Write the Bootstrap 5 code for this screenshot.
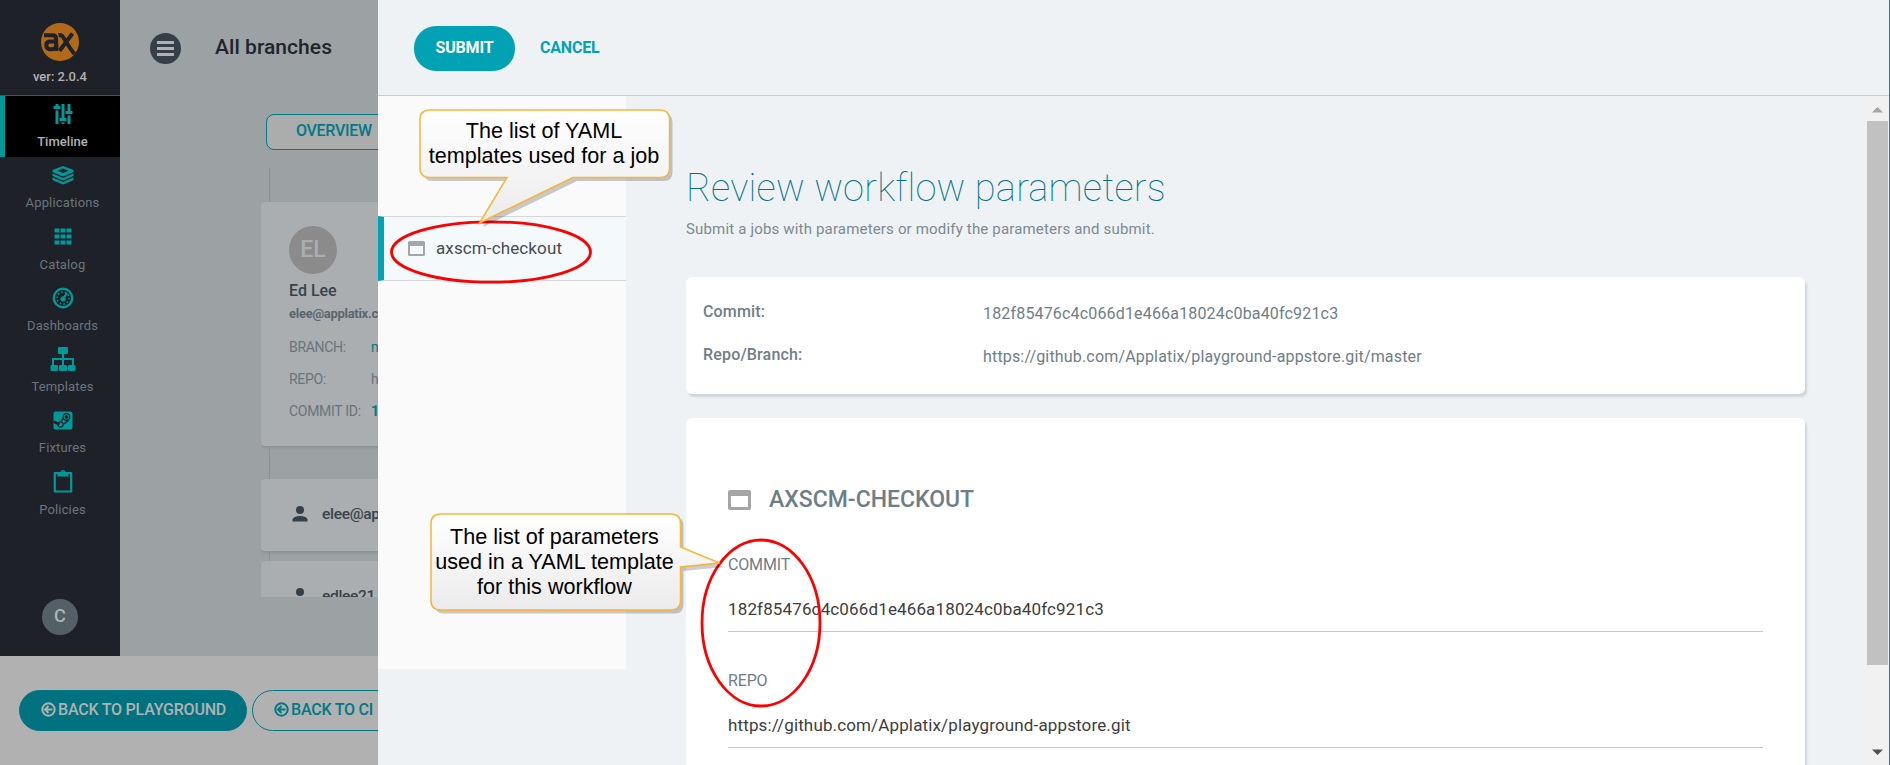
<!DOCTYPE html>
<html lang="en">
<head>
<meta charset="utf-8">
<title>Review workflow parameters</title>
<link href="https://cdn.jsdelivr.net/npm/bootstrap@5.3.0/dist/css/bootstrap.min.css" rel="stylesheet">
<style>
body{font-family:Roboto,"Liberation Sans",sans-serif;font-size:16px;line-height:20px;width:1890px;height:765px;overflow:hidden;background:#eef2f5}
.backdrop-page{width:378px;height:765px;overflow:hidden;background:#b1b1b1}
.app-shell{height:656px}
.side{width:120px;background:#1e2128}
.brand{height:96px;border-bottom:1px solid #515357;padding-top:23px}
.ver{font-size:13px;font-weight:500;line-height:16px;color:#b1b1b1;margin-top:8px}
.side .nav-link{height:61.3px;padding:0;border-left:5px solid transparent;border-radius:0;color:#6a757b;font-size:13px;line-height:16px;letter-spacing:.15px}
.side .nav-link svg{height:36px;width:26px;display:block;color:#009a9a;margin-bottom:2px;flex-shrink:0}
.side .nav-link.active{background:#000;border-color:#009a9a;color:#b1b1b1;font-weight:500;letter-spacing:.05px}
.who{width:36px;height:36px;background:#536166;color:#b1b1b1;font-size:18px;font-weight:500;margin:0 0 21px 42px;padding-bottom:2px}
.work{width:258px;background:#9ca1a4}
.work-head{height:96px;padding:1px 0 0 30px}
.ttl{font-size:21px;font-weight:500;color:#20252d;margin:-3px 0 0 34px;line-height:24px;letter-spacing:.05px}
.tabbtn{width:300px;height:36px;border:1px solid #007985;border-radius:8px;background:#abadad;color:#007985;font-weight:500;margin:18px 0 0 146px;padding:6px 0 0 29px;white-space:nowrap;letter-spacing:-.3px}
.feed{margin:18px 0 0 141px;height:429px;overflow:hidden;padding-top:34px;background:linear-gradient(#8b9093,#8b9093) 8px 0/1px 100% no-repeat}
.bcard{background:#aaaeb1;border-radius:4px;box-shadow:1px 2px 3px #8b9194;width:300px;white-space:nowrap;color:#38434b}
.c1{height:244px;padding:24px 28px 0 28px}
.ava{width:48px;height:48px;background:#8b8b8b;color:#abaeb0;font-size:23px;font-weight:500;padding-bottom:1px}
.who-name{font-weight:500;margin-top:7px}
.who-mail{font-weight:700;font-size:13px;color:#59676d;margin:3px 0 7px;letter-spacing:-.28px}
.meta{font-size:14px;color:#68757c;line-height:32px;letter-spacing:-.3px}
.meta span{display:inline-block;width:82px}
.teal{color:#007985}
.c2{height:72px;padding:0 0 2px 31px}
.c2 + .c2{margin-top:10px}
.c1 + .c2{margin-top:33px}
.c2 span{font-size:15.500px;font-weight:500;margin-left:14px;letter-spacing:-.3px;margin-top:-1px}
.foot{padding:34px 0 0 19px;white-space:nowrap}
.pillb{height:41px;border-radius:21px;border:1px solid #007985;font-weight:500;padding:0 0 2px 21px;width:228px;letter-spacing:-.21px}
.pillb svg{margin-right:2px;flex-shrink:0}
.pill-solid{background:#00727f;color:#b1b1b1}
.pill-line{color:#007985;margin-left:5px}
.drawer{width:1512px;height:765px}
.dhead{height:96px;border-bottom:1px solid #c6ced3;padding:26px 0 0 36px}
.submit,.cancel{height:45px;font-weight:700;padding-bottom:2px;letter-spacing:-.2px}
.submit{width:101px;border-radius:22px;background:#00a2b4;color:#fff}
.cancel{color:#00a2b4;margin-left:25px}
.steps{width:248px;height:573px;background:#fafafa;padding-top:120px}
.step{height:65px;border:solid #d3d8da;border-width:1px 0;background:#f4f9fc;border-left:6px solid #00a2b4;padding-left:24px;color:#454d52;font-size:17px;letter-spacing:.12px}
.step span{margin:-2px 0 0 11px}
.review{width:1240px;height:669px;padding:68px 60px 0 60px;overflow:hidden}
h1{font-size:38px;font-weight:100;line-height:48px;color:#006f8a;margin:0;letter-spacing:.2px}
.subt{font-size:15px;color:#7c8a91;margin-top:7px;line-height:20px;letter-spacing:.17px}
.panelx{background:#fff;border-radius:6px;box-shadow:2px 3px 2px #ccd6dc;width:1119px;color:#6e7e87}
.p1{height:117px;margin-top:38px;padding:25px 17px;letter-spacing:.17px}
.p1 dt{width:280px;font-weight:500;line-height:20px}
.p1 dd{margin:2px 0 21px;line-height:20px}
.p2{height:420px;margin-top:24px;padding:69px 42px}
.p2 h2{font-size:23px;font-weight:500;line-height:26px;margin:0 0 0 17px}
.p2 svg{margin-top:-1px}
.fld label{display:block;line-height:20px;letter-spacing:-.15px}
.fld .val{color:#3d3d3d;border-bottom:1px solid #c4c8ca;height:57px;padding-top:24px;line-height:20px;font-size:17px;letter-spacing:.14px}
.f1{margin-top:42px}
.f2{margin-top:39px}
.sbar{width:24px;background:#f1f1f1;border-right:1px solid #2a80bd;height:669px;padding:10px 1px 9px}
.thumb{width:21px;height:544px;background:#c1c1c1;margin:8px 0 84px}
.edge{right:0;top:0;width:1px;height:96px;background:#2a80bd}
.marks{left:0;top:0}
.note{font:21.600px/25px "Liberation Sans",Arial,sans-serif;color:#000;text-align:center;white-space:nowrap;width:249px}
.n1{left:419.500px;top:118px}
.n2{left:430px;top:524px}
</style>
</head>
<body class="position-relative">
<div class="d-flex">
<div class="backdrop-page">
  <div class="app-shell d-flex">
    <nav class="side d-flex flex-column flex-shrink-0">
      <div class="brand text-center flex-shrink-0">
        <svg width="38" height="38" viewBox="0 0 38 38" class="d-block mx-auto"><circle cx="19" cy="19" r="19" fill="#b06a18"/><g fill="none" stroke="#1e2128" stroke-width="4"><path d="M3 12.200H11.500Q15.200 12.200 15.200 16V28"/><path d="M15.500 18.500H9Q5.300 18.500 5.300 22.300T9 26.200H11Q15.500 26 15.500 22"/><path d="M17.500 12Q20.500 11.500 22 14L29 25Q31 28 33.500 31"/><path d="M31.500 10.500L18.500 27.800"/></g></svg>
        <div class="ver">ver: 2.0.4</div>
      </div>
      <div class="nav flex-column text-center flex-nowrap">
        <a class="nav-link active d-flex flex-column align-items-center"><svg viewBox="-13 -18 26 36" fill="currentColor"><path d="M-7.500-10h3v2h2v3h-7v-3h2zM-7.500-3.500h3V10h-3zM-1.500-10h3V4h2v3h-7V4h2zM-1.500 8.500h3V10h-3zM4.500-10h3v7h2v3h-7v-3h2zM4.500 1.500h3V10h-3z"/></svg><span>Timeline</span></a>
        <a class="nav-link d-flex flex-column align-items-center"><svg viewBox="-13 -18 26 36" fill="currentColor"><path fill-rule="evenodd" d="M0-9l10.500 4v2L0 1.500-10.500-3v-2zM0-6.500L-5.500-4.200 0-2 5.500-4.200z"/><path d="M-10.500-1.500L0 3l10.500-4.500V1L0 5.500-10.500 1zM-10.500 2.500L0 7l10.500-4.500V5L0 9.500-10.500 5z"/></svg><span>Applications</span></a>
        <a class="nav-link d-flex flex-column align-items-center"><svg viewBox="-13 -18 26 36" fill="currentColor"><path d="M-8.500-8.500h5v4h-5zM-2.500-8.500h5v4h-5zM3.500-8.500h5v4h-5zM-8.500-2.500h5v4h-5zM-2.500-2.500h5v4h-5zM3.500-2.500h5v4h-5zM-8.500 3.500h5v4h-5zM-2.500 3.500h5v4h-5zM3.500 3.500h5v4h-5z"/></svg><span>Catalog</span></a>
        <a class="nav-link d-flex flex-column align-items-center"><svg viewBox="-13 -18 26 36" fill="none" stroke="currentColor"><circle r="9.200" stroke-width="2.400"/><circle r="6" stroke-width="1.400" stroke-dasharray="1.200 1.700" pathLength="29"/><circle cy="1" r="2.200" fill="currentColor"/><path d="M0 1L4-5" stroke-width="2.200"/></svg><span>Dashboards</span></a>
        <a class="nav-link d-flex flex-column align-items-center"><svg viewBox="-13 -18 26 36" fill="currentColor"><rect x="-5" y="-12" width="10" height="7" rx="1"/><rect x="-12.500" y="6" width="7.500" height="6" rx="1"/><rect x="-4" y="6" width="8" height="6" rx="1"/><rect x="5" y="6" width="7.500" height="6" rx="1"/><path d="M-1-6h2v5h10v8h-2V1H1v6h-2V1H-9v6h-2v-8h10z"/></svg><span>Templates</span></a>
        <a class="nav-link d-flex flex-column align-items-center"><svg viewBox="-13 -18.500 26 36"><rect x="-9.500" y="-9" width="19" height="18" rx="2" fill="currentColor"/><g fill="none" stroke="#1e2128"><circle cx="3.500" cy="-3.500" r="3.300" stroke-width="1.200"/><circle cx="3.500" cy="-3.500" r="1.400" fill="#1e2128"/><circle cx="-2.500" cy="4" r="2.700" stroke-width="1.200"/><path d="M-9.500 1l6 3" stroke-width="2.600"/><path d="M0-2l-2 3M5.500 0L0 4" stroke-width="1.400"/></g></svg><span>Fixtures</span></a>
        <a class="nav-link d-flex flex-column align-items-center"><svg viewBox="-13 -17.500 26 36"><path d="M-8.200-8.500H8.200V10H-8.200z" fill="none" stroke="currentColor" stroke-width="2.200" stroke-linejoin="round"/><path fill="currentColor" fill-rule="evenodd" d="M-5.500-9.500h3a2.600 2.600 0 0 1 5 0h3v4.500h-11zM-1-9a1 1 0 1 0 2 0 1 1 0 1 0-2 0z"/></svg><span>Policies</span></a>
      </div>
      <div class="who rounded-circle d-flex align-items-center justify-content-center mt-auto">C</div>
    </nav>
    <main class="work">
      <div class="work-head d-flex align-items-center">
        <svg width="31" height="31" viewBox="0 0 31 31"><circle cx="15.500" cy="15.500" r="15.500" fill="#343f47"/><path d="M7 9.500h17M7 15.500h17M7 21.500h17" stroke="#b1b1b1" stroke-width="3"/></svg>
        <div class="ttl">All branches</div>
      </div>
      <div class="tabbtn">OVERVIEW</div>
      <div class="feed">
        <div class="bcard c1">
          <div class="ava rounded-circle d-flex align-items-center justify-content-center">EL</div>
          <div class="who-name">Ed Lee</div>
          <div class="who-mail">elee@applatix.c</div>
          <div class="meta"><span>BRANCH:</span><b class="teal fw-normal">m</b></div>
          <div class="meta"><span>REPO:</span>h</div>
          <div class="meta"><span>COMMIT ID:</span><b class="teal">1</b></div>
        </div>
        <div class="bcard c2 d-flex align-items-center">
          <svg width="16" height="16" viewBox="0 0 16 16" fill="#343f47"><circle cx="8" cy="4" r="4"/><path d="M.5 15.500v-2Q1.500 10 8 10t7.500 3.500v2z"/></svg><span>elee@ap</span>
        </div>
        <div class="bcard c2 d-flex align-items-center">
          <svg width="16" height="16" viewBox="0 0 16 16" fill="#343f47"><circle cx="8" cy="4" r="4"/><path d="M.5 15.500v-2Q1.500 10 8 10t7.500 3.500v2z"/></svg><span>edlee21</span>
        </div>
      </div>
    </main>
  </div>
  <div class="foot d-flex">
    <div class="pillb pill-solid d-flex align-items-center flex-shrink-0"><svg width="15" height="15" viewBox="0 0 15 15" fill="none" stroke="currentColor" stroke-width="2"><circle cx="7.500" cy="7.500" r="6.200"/><path d="M11.500 7.500H4.500M7.500 4L4 7.500 7.500 11"/></svg>BACK TO PLAYGROUND</div>
    <div class="pillb pill-line d-flex align-items-center flex-shrink-0"><svg width="15" height="15" viewBox="0 0 15 15" fill="none" stroke="currentColor" stroke-width="2"><circle cx="7.500" cy="7.500" r="6.200"/><path d="M11.500 7.500H4.500M7.500 4L4 7.500 7.500 11"/></svg>BACK TO CI</div>
  </div>
</div>
<section class="drawer position-relative">
  <div class="dhead d-flex">
    <div class="submit d-flex align-items-center justify-content-center">SUBMIT</div>
    <div class="cancel d-flex align-items-center">CANCEL</div>
    <div class="edge position-absolute"></div>
  </div>
  <div class="d-flex">
    <aside class="steps flex-shrink-0">
      <div class="step d-flex align-items-center"><svg width="17" height="15" viewBox="0 0 17 15"><path fill="#a3a5a6" fill-rule="evenodd" d="M1.500 0h14A1.500 1.500 0 0 1 17 1.500v12a1.500 1.500 0 0 1-1.500 1.500h-14A1.500 1.500 0 0 1 0 13.500v-12A1.500 1.500 0 0 1 1.500 0zM2 5v8h13V5z"/></svg><span>axscm-checkout</span></div>
    </aside>
    <div class="review flex-shrink-0">
      <h1>Review workflow parameters</h1>
      <div class="subt">Submit a jobs with parameters or modify the parameters and submit.</div>
      <div class="panelx p1">
        <dl class="m-0">
          <div class="d-flex"><dt>Commit:</dt><dd>182f85476c4c066d1e466a18024c0ba40fc921c3</dd></div>
          <div class="d-flex"><dt>Repo/Branch:</dt><dd>https://github.com/Applatix/playground-appstore.git/master</dd></div>
        </dl>
      </div>
      <div class="panelx p2">
        <div class="d-flex align-items-center"><svg width="24" height="20" viewBox="0 0 24 20"><path fill="#a3a5a6" fill-rule="evenodd" d="M2 0h19a2 2 0 0 1 2 2v16a2 2 0 0 1-2 2H2a2 2 0 0 1-2-2V2a2 2 0 0 1 2-2zM3 6v11h17V6z"/></svg><h2>AXSCM-CHECKOUT</h2></div>
        <div class="fld f1"><label>COMMIT</label><div class="val">182f85476c4c066d1e466a18024c0ba40fc921c3</div></div>
        <div class="fld f2"><label>REPO</label><div class="val">https://github.com/Applatix/playground-appstore.git</div></div>
      </div>
    </div>
    <div class="sbar"><svg width="21" height="7" viewBox="0 0 21 7" class="d-block"><path d="M5 6.500L10.500 1 16 6.500z" fill="#a3a3a3"/></svg><div class="thumb"></div><svg width="21" height="7" viewBox="0 0 21 7" class="d-block"><path d="M5 .5L10.500 6 16 .5z" fill="#505050"/></svg></div>
  </div>
</section>
</div>
<svg class="marks position-absolute" width="1890" height="765" viewBox="0 0 1890 765">
  <defs><linearGradient id="g" x1="0" y1="0" x2="0" y2="1"><stop offset="0" stop-color="#fff"/><stop offset="1" stop-color="#ebebeb"/></linearGradient></defs>
  <g fill="none" stroke="#f00" stroke-width="2.800"><ellipse cx="491" cy="252" rx="99.500" ry="30.200"/><ellipse cx="761" cy="623" rx="59" ry="83"/></g>
  <path d="M430 113.500H664Q672.500 113.500 672.500 122V172Q672.500 181 664 181H577L483 227 511 181H432Q424 181 424 172V122z" fill="#000" fill-opacity=".2"/>
  <path d="M430 110H660Q669.500 110 669.500 119.500V168Q669.500 177.500 660 177.500H573L479.500 223 507 177.500H430Q420 177.500 420 168V119.500Q420 110 430 110z" fill="url(#g)" stroke="#fab437" stroke-width="1.500"/>
  <path d="M441 517H675Q683.500 517 683.500 526V551L724 567 683.500 571V604Q683.500 613.500 675 613.500H443Q435 613.500 435 604V526z" fill="#000" fill-opacity=".2"/>
  <path d="M441 514H671Q680.500 514 680.500 523.500V547L719.500 563 680.500 567V600.500Q680.500 610 671 610H441Q431 610 431 600.500V523.500Q431 514 441 514z" fill="url(#g)" stroke="#fab437" stroke-width="1.500"/>
</svg>
<div class="note n1 position-absolute">The list of YAML<br>templates used for a job</div>
<div class="note n2 position-absolute">The list of parameters<br>used in a YAML template<br>for this workflow</div>
<script src="https://cdn.jsdelivr.net/npm/bootstrap@5.3.0/dist/js/bootstrap.bundle.min.js"></script>
</body>
</html>
